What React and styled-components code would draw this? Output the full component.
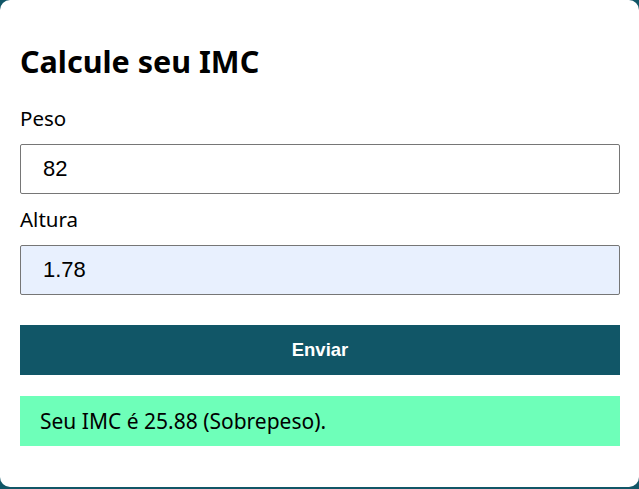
import React from "react"
import styled, { createGlobalStyle } from 'styled-components'

const Global = createGlobalStyle`
	html, body { margin:0; padding:0; }
	body {
		background:#115667;
		font-family:"Noto Sans", sans-serif;
		height:489px;
		overflow:hidden;
	}
	* { box-sizing:border-box; }
`

const Card = styled.main`
	background:#fff;
	border-radius:10px;
	height:487px;
	padding:41px 19px 0 20px;
`

const Title = styled.h2`
	margin:0 0 24px;
	font-size:30.5px;
	font-weight:700;
	line-height:40px;
	color:#000;
`

const Field = styled.div`
	display:flex;
	flex-direction:column;
	margin-bottom:${p=>p.$last?'30px':'12px'};
`

const Label = styled.label`
	font-size:20.5px;
	line-height:27px;
	margin-bottom:12px;
	color:#000;
`

const Input = styled.input`
	height:50px;
	width:100%;
	padding:0 22px;
	border:1px solid #767676;
	border-radius:2px;
	background:${p=>p.$filled?'#e8f0fe':'#fff'};
	font-family:"Liberation Sans", Arial, sans-serif;
	font-size:22px;
	color:#000;
	outline:none;
`

const Button = styled.button`
	display:block;
	width:100%;
	height:50px;
	border:none;
	background:#115667;
	color:#fff;
	font-family:"Liberation Sans", Arial, sans-serif;
	font-size:18.5px;
	font-weight:700;
	margin-bottom:21px;
	cursor:pointer;
`

const Result = styled.p`
	margin:0;
	height:50px;
	display:flex;
	align-items:center;
	padding:0 20px;
	background:#6effb9;
	font-size:21px;
	color:#000;
`

export default function App(){
	return (
		<>
			<Global/>
			<Card>
				<Title>Calcule seu IMC</Title>
				<Field>
					<Label htmlFor="peso">Peso</Label>
					<Input id="peso" defaultValue="82"/>
				</Field>
				<Field $last>
					<Label htmlFor="altura">Altura</Label>
					<Input id="altura" defaultValue="1.78" $filled/>
				</Field>
				<Button>Enviar</Button>
				<Result>Seu IMC é 25.88 (Sobrepeso).</Result>
			</Card>
		</>
	)
}
